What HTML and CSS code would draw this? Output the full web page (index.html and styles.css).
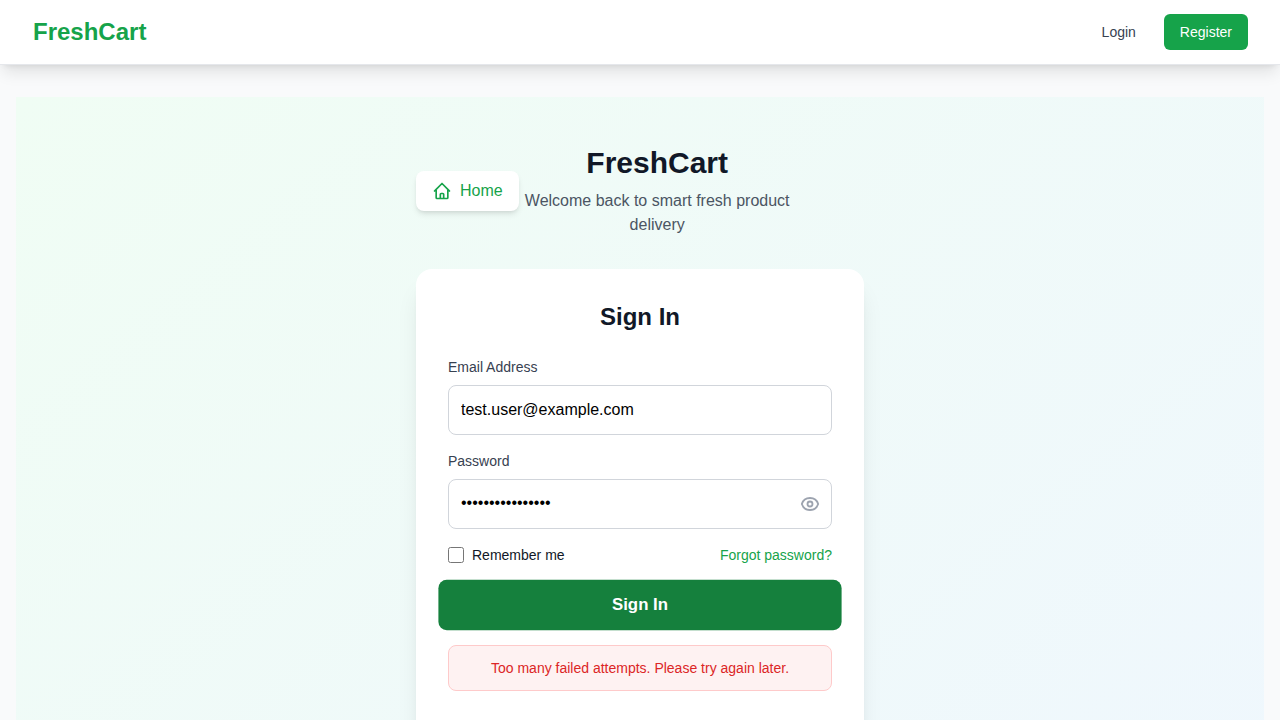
FILE: index.html
```html
<!DOCTYPE html>
<html lang="en">
<head>
<meta charset="utf-8">
<title>FreshCart</title>
<link rel="stylesheet" href="styles.css">
</head>
<body>
<div class="page">
<header class="navbar">
  <a class="brand">FreshCart</a>
  <nav class="nav-links">
    <a class="nav-login">Login</a>
    <a class="nav-register">Register</a>
  </nav>
</header>
<main class="main">
  <section class="auth">
    <div class="auth-column">
      <div class="intro">
        <a class="home-link">
          <svg class="icon" viewBox="0 0 24 24" fill="none" stroke="currentColor" stroke-width="2" stroke-linecap="round" stroke-linejoin="round"><path d="M3 12l2-2m0 0l7-7 7 7M5 10v10a1 1 0 001 1h3m10-11l2 2m-2-2v10a1 1 0 01-1 1h-3m-6 0a1 1 0 001-1v-4a1 1 0 011-1h2a1 1 0 011 1v4a1 1 0 001 1m-6 0h6"/></svg>
          <span>Home</span>
        </a>
        <div class="intro-text">
          <h1 class="title">FreshCart</h1>
          <p class="subtitle">Welcome back to smart fresh product delivery</p>
        </div>
      </div>
      <div class="card">
        <h2 class="card-title">Sign In</h2>
        <form class="form">
          <div class="field">
            <label class="label" for="email">Email Address</label>
            <input class="input" id="email" type="email" value="test.user@example.com">
          </div>
          <div class="field">
            <label class="label" for="password">Password</label>
            <div class="password-wrap">
              <input class="input input-password" id="password" type="password" value="aaaaaaaaaaaaaaaa">
              <svg class="icon eye" viewBox="0 0 24 24" fill="none" stroke="currentColor" stroke-width="2.2" stroke-linecap="round" stroke-linejoin="round"><path d="M15 12a3 3 0 11-6 0 3 3 0 016 0z"/><path d="M2.2 12C3.5 7.8 7.4 4.8 12 4.8s8.5 3 9.8 7.2c-1.3 4.2-5.2 7.2-9.8 7.2S3.5 16.2 2.2 12z"/></svg>
            </div>
          </div>
          <div class="options">
            <label class="remember"><input class="checkbox" type="checkbox">Remember me</label>
            <a class="forgot">Forgot password?</a>
          </div>
          <button class="submit" type="button">Sign In</button>
          <div class="alert">Too many failed attempts. Please try again later.</div>
        </form>
      </div>
    </div>
  </section>
</main>
</div>
</body>
</html>
```
FILE: styles.css
```css
* { box-sizing: border-box; margin: 0; padding: 0; }
body {
  background: #f9fafb;
  color: #111827;
  font: 16px/24px "Liberation Sans", Arial, sans-serif;
}
.page { height: 720px; overflow: hidden; }
.navbar {
  display: flex;
  align-items: center;
  justify-content: space-between;
  height: 65px;
  padding: 0 32px;
  background: #fff;
  border-bottom: 1px solid #e5e7eb;
  box-shadow: 0 10px 15px -3px rgba(0, 0, 0, .1), 0 4px 6px -4px rgba(0, 0, 0, .1);
}
.brand { padding-left: 1px; color: #16a34a; font-size: 24px; line-height: 32px; font-weight: 700; }
.nav-links { display: flex; align-items: center; gap: 16px; font-size: 14px; line-height: 20px; }
.nav-login { padding: 8px 12px; color: #374151; }
.nav-register { padding: 8px 16px; border-radius: 6px; background: #16a34a; color: #fff; }
.main { padding: 32px 16px; }
.auth {
  display: flex;
  justify-content: center;
  min-height: 1050px;
  padding: 48px 16px;
  background: linear-gradient(to bottom right, #f0fdf4, #eff6ff);
}
.auth-column { width: 448px; }
.intro { display: flex; align-items: center; margin-bottom: 32px; }
.home-link {
  display: flex;
  flex-shrink: 0;
  align-items: center;
  gap: 8px;
  padding: 8px 16px;
  border-radius: 8px;
  background: #fff;
  color: #16a34a;
  box-shadow: 0 4px 6px -1px rgba(0, 0, 0, .1), 0 2px 4px -2px rgba(0, 0, 0, .1);
}
.icon { display: block; width: 20px; height: 20px; }
.intro-text { width: 277px; text-align: center; }
.title { margin-bottom: 8px; font-size: 30px; line-height: 36px; }
.subtitle { color: #4b5563; }
.card {
  min-height: 790px;
  padding: 32px;
  border-radius: 16px;
  background: #fff;
  box-shadow: 0 20px 25px -5px rgba(0, 0, 0, .1), 0 8px 10px -6px rgba(0, 0, 0, .1);
}
.card-title { margin-bottom: 24px; font-size: 24px; line-height: 32px; text-align: center; }
.form { display: flex; flex-direction: column; gap: 16px; }
.label { display: block; margin-bottom: 8px; color: #374151; font-size: 14px; line-height: 20px; }
.input {
  display: block;
  width: 100%;
  height: 50px;
  padding: 12px;
  border: 1px solid #d1d5db;
  border-radius: 8px;
  background: #fff;
  color: #000;
  font: inherit;
}
.input-password { padding: 11px 40px 13px 12px; }
.password-wrap { position: relative; }
.eye { position: absolute; top: 15px; right: 12px; color: #9ca3af; }
.options { display: flex; align-items: center; justify-content: space-between; font-size: 14px; line-height: 20px; }
.remember { display: flex; align-items: center; gap: 8px; }
.checkbox { width: 16px; height: 16px; }
.forgot { color: #16a34a; }
.submit {
  height: 48px;
  border: 0;
  border-radius: 8px;
  background: #15803d;
  color: #fff;
  font: inherit;
  font-weight: 700;
  transform: scale(1.05);
}
.alert {
  padding: 12px;
  border: 1px solid #fecaca;
  border-radius: 8px;
  background: #fef2f2;
  color: #dc2626;
  font-size: 14px;
  line-height: 20px;
  text-align: center;
}
```
